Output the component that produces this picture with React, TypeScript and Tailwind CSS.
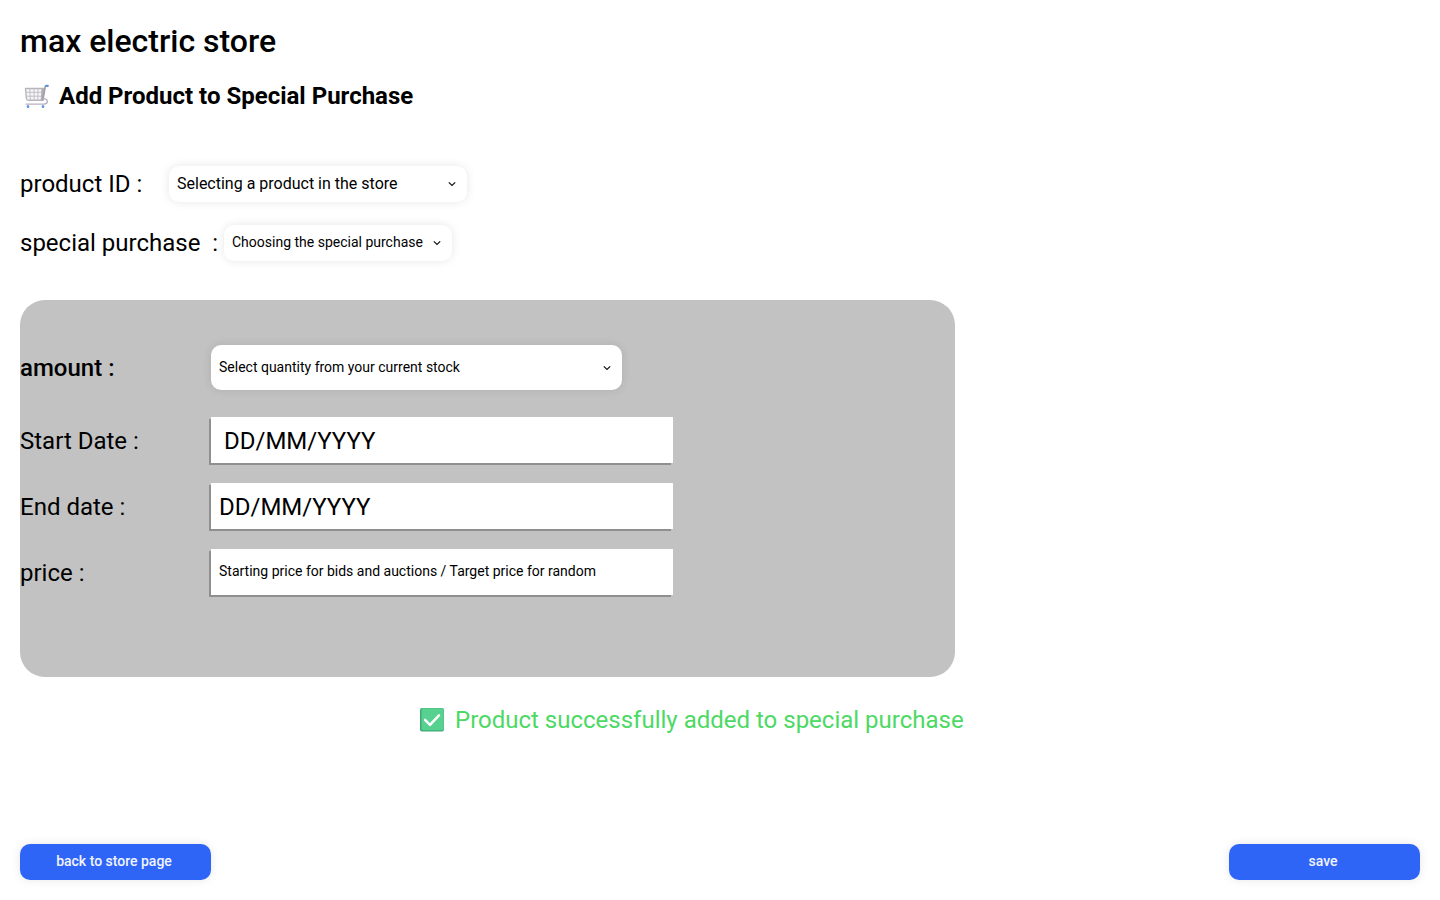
import type { ReactNode } from "react";

function CartIcon() {
  return (
    <svg viewBox="0 0 32 32" className="size-8 shrink-0" fill="none" aria-hidden="true">
      <path d="M5.500 8.500h18.800l-1.600 11.800H8.400a2 2 0 0 1-2-1.800z" fill="#f6f5f7" stroke="#b8b4bc" strokeWidth="1.400" strokeLinejoin="round" />
      <path d="M9.800 8.500l.6 12M14 8.500l.2 12M18 8.500l-.2 12M6 12.300h18M6.400 16.200h17.200" stroke="#c3bfc7" strokeWidth="1" />
      <path d="M21.500 8.500h2.800l-1.600 11.800h-2z" fill="#b2adb6" />
      <path d="M27 5.800h-1.600L22.800 20.300" stroke="#a19ca6" strokeWidth="1.600" strokeLinejoin="round" />
      <path d="M23 18.600c3 0 4.300 1.100 4.300 2.700s-1.300 2.800-3.300 2.800H6" stroke="#bbb0c6" strokeWidth="1.400" strokeLinecap="round" />
      <path d="M26.400 5.800h1.400" stroke="#5b93dc" strokeWidth="2.200" strokeLinecap="round" />
      <ellipse cx="8" cy="26.500" rx="1.300" ry="1.500" fill="#5a93e4" />
      <ellipse cx="23" cy="26.500" rx="1.300" ry="1.500" fill="#5a93e4" />
    </svg>
  );
}

function CheckIcon() {
  return (
    <svg viewBox="0 0 24 24" className="size-6 shrink-0" fill="none" aria-hidden="true">
      <rect width="24" height="23.500" rx="2" fill="#41a877" />
      <rect x="1.500" y="0.300" width="22.300" height="22" rx="1.500" fill="#56d190" />
      <path d="M5 11.800l5 5L19 7.300" stroke="#fff" strokeWidth="2.500" strokeLinecap="round" strokeLinejoin="round" />
    </svg>
  );
}

function Select({ id, label, className }: { id: string; label: string; className: string }) {
  return (
    <div className="relative">
      <select
        id={id}
        className={`block appearance-none rounded-[10px] bg-white pr-7 pl-2 shadow-[0_0_10px_rgba(0,0,0,0.1)] ${className}`}
      >
        <option>{label}</option>
      </select>
      <svg viewBox="0 0 8 8" className="pointer-events-none absolute inset-y-0 right-[11px] my-auto size-2" fill="none" aria-hidden="true">
        <path d="M.8 2.300L4 5.500l3.200-3.200" stroke="#111" strokeWidth="1.200" />
      </svg>
    </div>
  );
}

function PanelRow({ id, label, className, children }: { id: string; label: string; className: string; children: ReactNode }) {
  return (
    <div className="flex items-center">
      <label htmlFor={id} className={`w-[191px] shrink-0 ${className}`}>
        {label}
      </label>
      {children}
    </div>
  );
}

const field =
  "h-[46px] w-full max-w-[462px] bg-white pr-2 text-black shadow-[-2px_2px_0_#8f8f8f] placeholder:text-black placeholder:opacity-100";
const button =
  "h-9 w-[191px] rounded-[10px] bg-[#2f65f6] pr-[3px] pb-0.5 text-sm font-medium text-[#f1f4ff] shadow-[0_0_10px_rgba(0,0,0,0.1)]";

export default function App() {
  return (
    <main className="flex min-h-screen flex-col bg-white p-5 font-['Roboto',sans-serif] text-2xl text-black">
      <h1 className="text-[32px]/[42px] font-medium">max electric store</h1>
      <h2 className="mt-[18px] flex items-center gap-[7px] font-bold">
        <CartIcon />
        Add Product to Special Purchase
      </h2>

      <form className="flex grow flex-col" onSubmit={(e) => e.preventDefault()}>
        <div className="mt-[54px] flex items-center">
          <label htmlFor="product" className="w-[149px]">product ID :</label>
          <Select id="product" label="Selecting a product in the store" className="h-9 w-[298px] text-base" />
        </div>
        <div className="mt-[23px] flex items-center">
          <label htmlFor="purchase" className="w-[204px] whitespace-pre">special purchase  :</label>
          <Select id="purchase" label="Choosing the special purchase" className="h-9 w-[228px] pb-0.5 text-sm" />
        </div>

        <section className="mt-[39px] flex max-w-[935px] flex-col gap-5 rounded-[25px] bg-[#c2c2c2] pt-[45px] pb-[82px]">
          <div className="pb-[7px]">
            <PanelRow id="amount" label="amount :" className="font-medium">
              <Select id="amount" label="Select quantity from your current stock" className="h-[45px] w-[411px] pb-0.5 text-sm" />
            </PanelRow>
          </div>
          <PanelRow id="start" label="Start Date :" className="pt-0.5">
            <input id="start" type="text" placeholder="DD/MM/YYYY" className={`${field} pt-0.5 pl-[13px]`} />
          </PanelRow>
          <PanelRow id="end" label="End date :" className="pt-0.5">
            <input id="end" type="text" placeholder="DD/MM/YYYY" className={`${field} pt-0.5 pl-2`} />
          </PanelRow>
          <PanelRow id="price" label="price :" className="pt-0.5">
            <input
              id="price"
              type="text"
              placeholder="Starting price for bids and auctions / Target price for random"
              className={`${field} pb-0.5 pl-2 text-sm`}
            />
          </PanelRow>
        </section>

        <p role="status" className="mt-[27px] flex items-center gap-[11px] pl-[400px] text-[#4cd964]">
          <CheckIcon />
          Product successfully added to special purchase
        </p>

        <div className="mt-auto flex justify-between">
          <button type="button" className={button}>back to store page</button>
          <button type="submit" className={button}>save</button>
        </div>
      </form>
    </main>
  );
}
